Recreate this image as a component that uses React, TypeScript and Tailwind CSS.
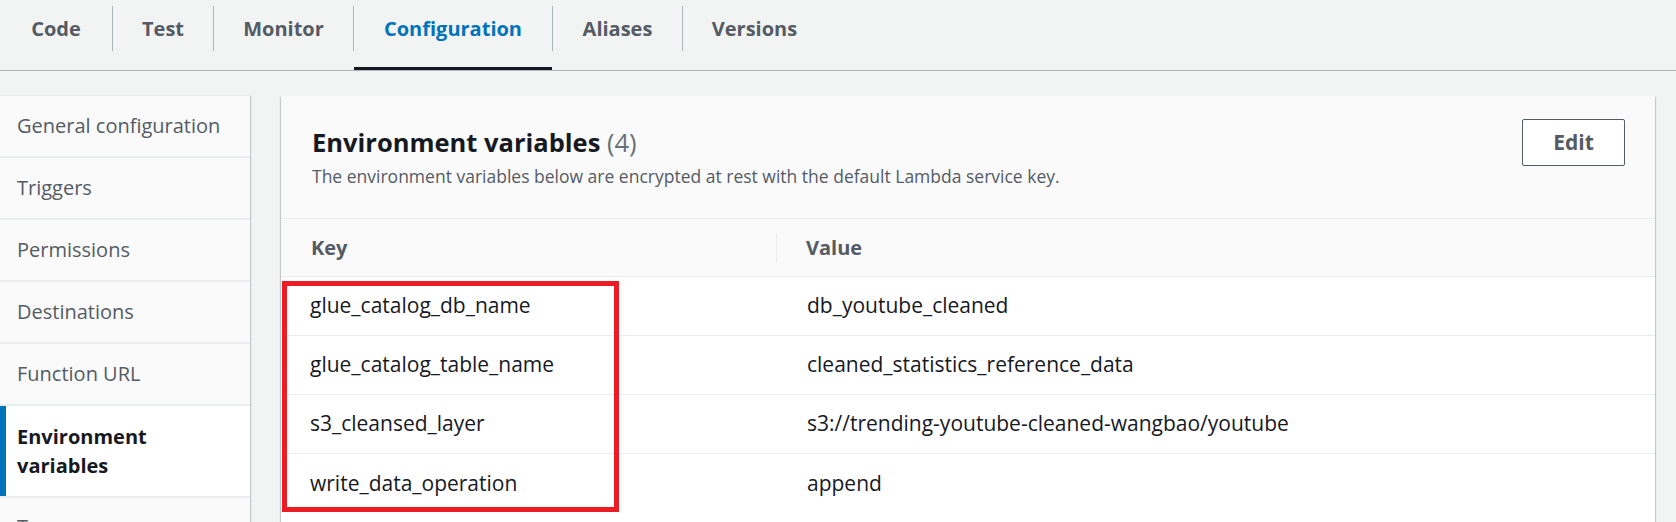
const tabs = [
  { label: "Code", w: "w-[112px]" },
  { label: "Test", w: "w-[101px]" },
  { label: "Monitor", w: "w-[140px]" },
  { label: "Configuration", w: "w-[199px]", active: true },
  { label: "Aliases", w: "w-[130px]" },
  { label: "Versions", w: "w-[144px]" },
];

const sideItems = [
  "General configuration",
  "Triggers",
  "Permissions",
  "Destinations",
  "Function URL",
];

const envVars = [
  ["glue_catalog_db_name", "db_youtube_cleaned"],
  ["glue_catalog_table_name", "cleaned_statistics_reference_data"],
  ["s3_cleansed_layer", "s3://trending-youtube-cleaned-wangbao/youtube"],
  ["write_data_operation", "append"],
];

export default function App() {
  return (
    <div className="h-[522px] overflow-hidden bg-[#f2f3f3] font-['Open_Sans',sans-serif] text-[#16191f]">
      {/* tab bar */}
      <div className="flex h-[71px] border-b border-[#aab7b8]">
        {tabs.map((t, i) => (
          <div key={t.label} className={`relative flex ${t.w}`}>
            <div
              className={`mt-[6px] flex h-[45px] flex-1 items-center justify-center text-[20px] font-bold ${
                i > 0 ? "border-l border-[#aab7b8]" : ""
              } ${t.active ? "text-[#0073bb]" : "text-[#545b64]"}`}
            >
              {t.label}
            </div>
            {t.active && <span className="absolute right-0 bottom-0 left-[1px] h-[3px] bg-[#16191f]" />}
          </div>
        ))}
      </div>

      <div className="flex gap-[31px] pt-[25px] pr-[21px]">
        {/* side nav */}
        <div className="flex w-[250px] shrink-0 flex-col gap-[2px] bg-[#eaeded] shadow-[1px_0_1px_rgba(0,28,36,0.2)]">
          {sideItems.map((s) => (
            <div key={s} className="flex h-[60px] items-center bg-[#fafafa] pl-[17px] text-[20px] text-[#545b64]">
              {s}
            </div>
          ))}
          <div className="relative bg-white py-[16px] pl-[17px] text-[20px] leading-[29px] font-bold">
            <span className="absolute top-0 bottom-0 left-0 w-[6px] bg-[#0073bb]" />
            Environment
            <br />
            variables
          </div>
          <div className="h-[60px] bg-[#fafafa] pt-[14px] pl-[17px] text-[20px] leading-[29px] text-[#545b64]">Tags</div>
        </div>

        {/* panel */}
        <div className="flex-1 bg-white shadow-[0_1px_1px_0_rgba(0,28,36,0.3),1px_1px_1px_0_rgba(0,28,36,0.15),-1px_1px_1px_0_rgba(0,28,36,0.15)]">
          <div className="flex items-start justify-between border-b border-[#eaeded] bg-[#fafafa] pt-[23px] pr-[30px] pb-[30px] pl-[31px]">
            <div className="pt-[6px]">
              <h2 className="text-[25.5px] leading-[34px] font-bold">
                Environment variables <span className="font-normal text-[#687078]">(4)</span>
              </h2>
              <p className="mt-[5px] text-[17.5px] leading-[24px] text-[#545b64]">
                The environment variables below are encrypted at rest with the default Lambda service key.
              </p>
            </div>
            <button className="h-[47px] w-[103px] rounded-[2px] border border-[#545b64] bg-white text-[21px] font-bold text-[#545b64]">
              Edit
            </button>
          </div>

          <div className="flex h-[58px] items-center border-b border-[#eaeded] bg-[#fafafa] text-[20px] font-bold text-[#545b64]">
            <div className="w-[495px] pl-[30px]">Key</div>
            <div className="h-[30px] w-px bg-[#eaeded]" />
            <div className="pl-[29px]">Value</div>
          </div>

          <div className="relative">
            {envVars.map(([k, v], i) => (
              <div
                key={k}
                className={`flex h-[59px] items-center text-[21px] ${i < 3 ? "border-b border-[#eaeded]" : ""}`}
              >
                <div className="w-[496px] pl-[29px]">{k}</div>
                <div className="pl-[30px]">{v}</div>
              </div>
            ))}
            <div className="absolute top-[4px] left-[1px] h-[231px] w-[337px] border-[5px] border-[#ec1c24]" />
          </div>
        </div>
      </div>
    </div>
  );
}
